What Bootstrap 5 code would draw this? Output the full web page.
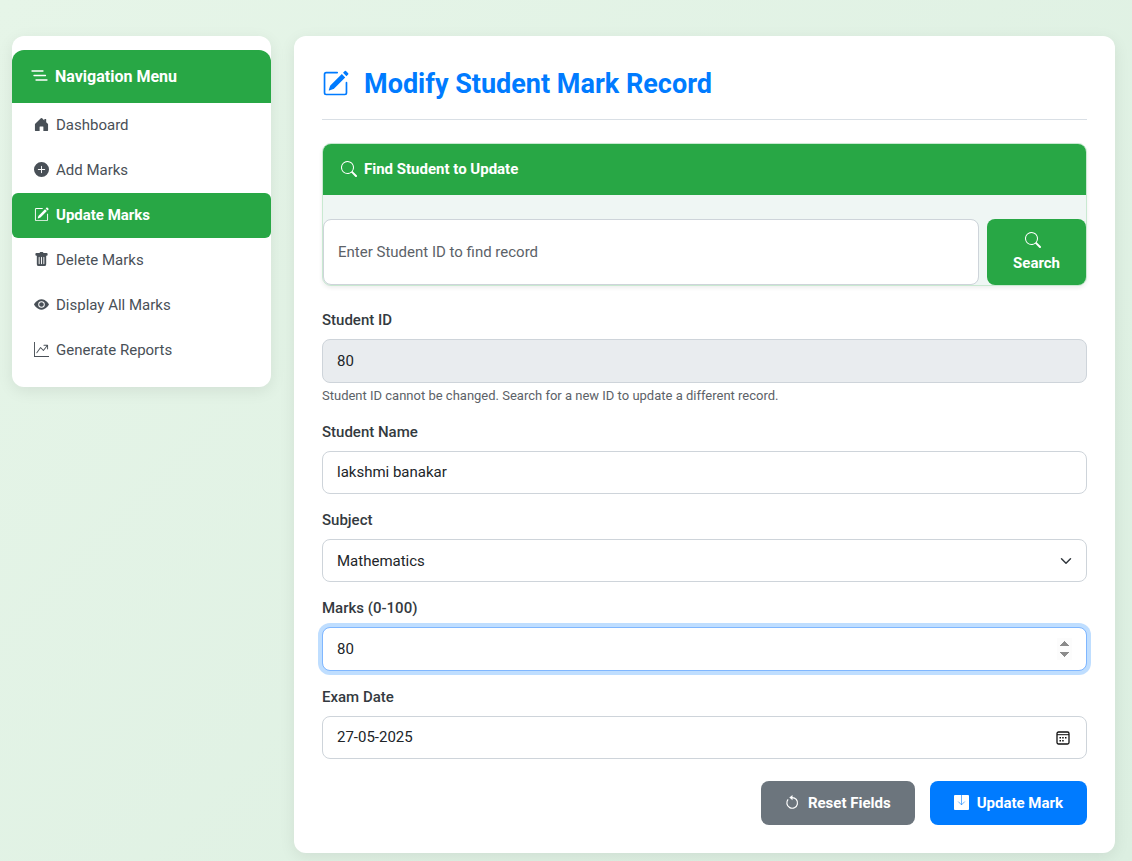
<!DOCTYPE html>
<html lang="en">
<head>
<meta charset="utf-8">
<meta name="viewport" content="width=device-width, initial-scale=1">
<title>Modify Student Mark Record</title>
<link href="https://cdn.jsdelivr.net/npm/bootstrap@5.3.0/dist/css/bootstrap.min.css" rel="stylesheet">
<style>
  body { font-family: Roboto, "Liberation Sans", sans-serif; font-size: 15px; line-height: 23px; color: #343a40; background: linear-gradient(135deg, #e6f5e8, #dcefe1) fixed; min-height: 100vh; }
  .page { padding: 36px 17px 8px 12px; gap: 23px; }
  .side-panel { flex: 0 0 259px; border-radius: 12px; padding: 14px 0; box-shadow: 0 4px 16px rgba(0,0,0,.08); }
  .main-panel { min-width: 0; border-radius: 12px; padding: 28px; box-shadow: 0 4px 16px rgba(0,0,0,.08); }
  .side-title { font-size: 16px; font-weight: 700; line-height: 23px; padding: 15px 19px; border-radius: 12px 12px 0 0; gap: 7px; }
  .fill-green { background: #28a745; color: #fff; }
  .side-link { display: flex; align-items: center; gap: 7px; padding: 11px 22px; color: #495057; text-decoration: none; border-radius: 6px; }
  .side-link.current { background: #28a745; color: #fff; font-weight: 700; }
  .page-title { font-size: 27px; line-height: 39px; font-weight: 700; color: #007bff; gap: 15px; padding: 1px 0 15px; margin-bottom: 23px; border-bottom: 1px solid #d9dfe5; }
  .find-card { border: 1px solid #c9e9d1; border-radius: 9px; background: #eff6f4; box-shadow: 0 2px 4px rgba(0,0,0,.07); margin-bottom: 23px; }
  .find-title { font-size: 15px; font-weight: 700; line-height: 23px; padding: 14px 18px; border-radius: 8px 8px 0 0; margin-bottom: 24px; gap: 7px; }
  .form-control, .form-select { font-size: 15px; line-height: 23px; padding: 9px 14px; border-color: #ced4da; border-radius: 8px; color: #212529; }
  .form-select { background-position: right 12px center; padding: 10px 14px 8px; }
  .form-control.find-input { padding: 20px 14px; }
  .form-control::placeholder { color: #5c6268; }
  .form-label { font-weight: 500; margin-bottom: 7px; display: block; }
  .form-text { font-size: 13px; line-height: 20px; color: #5c6268; margin-top: 3px; }
  .field { margin-bottom: 15px; }
  .form-control[readonly] { background: #e9ecef; }
  .form-control[readonly], .form-control[type=number] { padding: 10px 14px 9px; }
  .is-active { border-color: #80b7ff; box-shadow: 0 0 0 4px rgba(0,123,255,.25); }
  .is-active::-webkit-inner-spin-button { opacity: 1; }
  .last-field { margin-bottom: 22px; }
  .actions { gap: 15px; }
  .btn { font-size: 15px; line-height: 22px; font-weight: 700; border: 0; border-radius: 8px; padding: 11px 24px; color: #fff; }
  .btn.btn-find { background: #28a745; padding: 10px 26px; line-height: 24px; }
  .btn-find svg { margin-right: 8px; }
  .btn-clear { background: #6c757d; }
  .btn-save { background: #007bff; }
  .date-button { border: 0; background: none; padding: 0; right: 17px; }
  svg { flex: none; fill: currentColor; }
  .side-panel svg, .find-title svg, .page-title svg, .actions svg { margin-bottom: 2px; }
</style>
</head>
<body>
<svg class="d-none" aria-hidden="true">
  <symbol id="pencil" viewBox="0 0 16 16"><path d="M15.502 1.94a.5.5 0 0 1 0 .706L14.459 3.69l-2-2L13.502.646a.5.5 0 0 1 .707 0l1.293 1.293zm-1.75 2.456-2-2L4.939 9.21a.5.5 0 0 0-.121.196l-.805 2.414a.25.25 0 0 0 .316.316l2.414-.805a.5.5 0 0 0 .196-.12l6.813-6.814z"/><path fill-rule="evenodd" d="M1 13.5A1.500 1.500 0 0 0 2.500 15h11a1.500 1.500 0 0 0 1.500-1.500v-6a.5.5 0 0 0-1 0v6a.5.5 0 0 1-.5.5h-11a.5.5 0 0 1-.5-.5v-11a.5.5 0 0 1 .5-.5H9a.5.5 0 0 0 0-1H2.500A1.500 1.500 0 0 0 1 2.500v11z"/></symbol>
  <symbol id="search" viewBox="0 0 16 16"><path d="M11.742 10.344a6.500 6.500 0 1 0-1.397 1.398h-.001c.03.04.062.078.098.115l3.850 3.850a1 1 0 0 0 1.415-1.414l-3.850-3.850a1.007 1.007 0 0 0-.115-.1zM12 6.500a5.500 5.500 0 1 1-11 0 5.500 5.500 0 0 1 11 0z"/></symbol>
</svg>
<div class="page d-flex align-items-start">
  <nav class="side-panel bg-white" aria-label="Navigation Menu">
    <div class="side-title fill-green d-flex align-items-center">
      <svg width="17" height="16" viewBox="0 0 17 16"><path d="M1 3h11M3 7.500h11.500M5 12h11" stroke="currentColor" stroke-width="1.300" stroke-linecap="round"/></svg>
      <span>Navigation Menu</span>
    </div>
    <a class="side-link" href="#"><svg width="15" height="15" viewBox="0 0 16 16"><path d="M7.300 1.300a1 1 0 0 1 1.400 0L11 3.600V2.500a.5.5 0 0 1 .5-.5h1a.5.5 0 0 1 .5.5v3.100l1.700 1.700a1 1 0 0 1 .3.700v6.500a.5.5 0 0 1-.5.5H10v-4.500a.5.5 0 0 0-.5-.5h-3a.5.5 0 0 0-.5.5V15H1.500a.5.5 0 0 1-.5-.5V8a1 1 0 0 1 .3-.7z"/></svg>Dashboard</a>
    <a class="side-link" href="#"><svg width="15" height="15" viewBox="0 0 16 16"><path d="M16 8A8 8 0 1 1 0 8a8 8 0 0 1 16 0zM8.500 4.500a.5.5 0 0 0-1 0v3h-3a.5.5 0 0 0 0 1h3v3a.5.5 0 0 0 1 0v-3h3a.5.5 0 0 0 0-1h-3v-3z"/></svg>Add Marks</a>
    <a class="side-link current" href="#" aria-current="page"><svg width="15" height="15"><use href="#pencil"/></svg>Update Marks</a>
    <a class="side-link" href="#"><svg width="15" height="15" viewBox="0 0 16 16"><path d="M2.500 1a1 1 0 0 0-1 1v1a1 1 0 0 0 1 1H3v9a2 2 0 0 0 2 2h6a2 2 0 0 0 2-2V4h.5a1 1 0 0 0 1-1V2a1 1 0 0 0-1-1H10a1 1 0 0 0-1-1H7a1 1 0 0 0-1 1H2.500zm3 4a.5.5 0 0 1 .5.5v7a.5.5 0 0 1-1 0v-7a.5.5 0 0 1 .5-.5zM8 5a.5.5 0 0 1 .5.5v7a.5.5 0 0 1-1 0v-7A.5.5 0 0 1 8 5zm3 .5v7a.5.5 0 0 1-1 0v-7a.5.5 0 0 1 1 0z"/></svg>Delete Marks</a>
    <a class="side-link" href="#"><svg width="15" height="15" viewBox="0 0 16 16"><path d="M10.500 8a2.500 2.500 0 1 1-5 0 2.500 2.500 0 0 1 5 0z"/><path d="M0 8s3-5.500 8-5.500S16 8 16 8s-3 5.500-8 5.500S0 8 0 8zm8 3.500a3.500 3.500 0 1 0 0-7 3.500 3.500 0 0 0 0 7z"/></svg>Display All Marks</a>
    <a class="side-link" href="#"><svg width="15" height="15" viewBox="0 0 16 16"><path fill-rule="evenodd" d="M0 0h1v15h15v1H0V0zm10 3.500a.5.5 0 0 1 .5-.5h4a.5.5 0 0 1 .5.5v4a.5.5 0 0 1-1 0V4.900l-3.613 4.417a.5.5 0 0 1-.74.037L7.060 6.767l-3.656 5.027a.5.5 0 0 1-.808-.588l4-5.500a.5.5 0 0 1 .758-.06l2.609 2.610L13.445 4H10.500a.5.5 0 0 1-.5-.5z"/></svg>Generate Reports</a>
  </nav>

  <main class="main-panel bg-white flex-grow-1">
    <h1 class="page-title d-flex align-items-center"><svg width="27" height="27"><use href="#pencil"/></svg>Modify Student Mark Record</h1>

    <section class="find-card">
      <h2 class="find-title fill-green d-flex align-items-center"><svg width="16" height="16"><use href="#search"/></svg>Find Student to Update</h2>
      <form class="d-flex gap-2">
        <input class="form-control find-input" type="text" placeholder="Enter Student ID to find record" aria-label="Student ID to find">
        <button class="btn btn-find d-flex flex-column align-items-center" type="button"><svg width="16" height="22"><use href="#search"/></svg><span>Search</span></button>
      </form>
    </section>

    <form>
      <div class="field">
        <label class="form-label" for="sid">Student ID</label>
        <input class="form-control" id="sid" type="text" value="80" readonly>
        <div class="form-text">Student ID cannot be changed. Search for a new ID to update a different record.</div>
      </div>
      <div class="field">
        <label class="form-label" for="sname">Student Name</label>
        <input class="form-control" id="sname" type="text" value="lakshmi banakar">
      </div>
      <div class="field">
        <label class="form-label" for="subject">Subject</label>
        <select class="form-select" id="subject"><option>Mathematics</option></select>
      </div>
      <div class="field">
        <label class="form-label" for="marks">Marks (0-100)</label>
        <input class="form-control is-active" id="marks" type="number" min="0" max="100" value="80">
      </div>
      <div class="last-field">
        <label class="form-label" for="exam">Exam Date</label>
        <div class="position-relative d-flex align-items-center">
          <input class="form-control" id="exam" type="text" value="27-05-2025">
          <button class="date-button position-absolute d-flex" type="button" aria-label="Choose date"><svg width="14" height="14" viewBox="0 0 14 14"><rect x="1" y="1" width="12" height="12" rx="1.500" fill="none" stroke="#111" stroke-width="1.300"/><path d="M1 3.700h12" stroke="#111"/><path d="M3.500 6h1.500v1.500H3.500zM6.200 6h1.500v1.500H6.200zM9 6h1.500v1.500H9zM3.500 9h1.500v1.500H3.500zM6.200 9h1.500v1.500H6.200z" fill="#111"/></svg></button>
        </div>
      </div>
      <div class="actions d-flex justify-content-end">
        <button class="btn btn-clear d-flex align-items-center gap-2" type="button"><svg width="15" height="15" viewBox="0 0 16 16"><path fill="none" stroke="currentColor" stroke-width="1.300" d="M3.300 4.700A5.700 5.700 0 1 0 7.500 2.700"/><path d="M8 5.500V0L4.600 2.700z"/></svg>Reset Fields</button>
        <button class="btn btn-save d-flex align-items-center" type="button"><svg class="me-2" width="15" height="15" viewBox="0 0 16 16"><rect width="16" height="16" rx="1"/><path d="M8 0v10.500M4.500 7 8 10.500 11.500 7" fill="none" stroke="#007bff" stroke-width=".8" opacity=".8"/></svg>Update Mark</button>
      </div>
    </form>
  </main>
</div>
<script src="https://cdn.jsdelivr.net/npm/bootstrap@5.3.0/dist/js/bootstrap.bundle.min.js"></script>
</body>
</html>
